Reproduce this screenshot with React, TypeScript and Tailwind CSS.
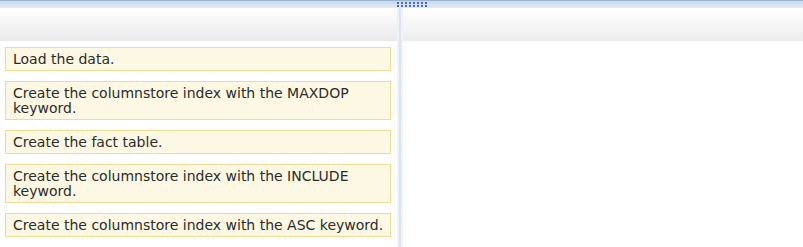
import React from "react";

const items: string[][] = [
  ["Load the data."],
  ["Create the columnstore index with the MAXDOP", "keyword."],
  ["Create the fact table."],
  ["Create the columnstore index with the INCLUDE", "keyword."],
  ["Create the columnstore index with the ASC keyword."],
];

export default function App() {
  return (
    <div
      className="w-[803px] h-[247px] flex flex-col bg-white overflow-hidden"
      style={{ fontFamily: '"DejaVu Sans", Verdana, sans-serif' }}
    >
      {/* top band */}
      <div className="h-[8px] flex flex-col shrink-0">
        <div className="h-[1px] bg-[#9db3cf]" />
        <div className="flex-1 bg-gradient-to-b from-[#c9d9ee] to-[#e0e9f5] flex items-start pl-[397px]">
          <div className="grid grid-cols-8 gap-x-[2px] gap-y-[1px] mt-[1px]">
            {Array.from({ length: 16 }).map((_, i) => (
              <div key={i} className="w-[2px] h-[2px] bg-[#4a6ea6]" />
            ))}
          </div>
        </div>
      </div>
      <div className="flex flex-1 min-h-0">
        {/* left panel */}
        <div className="w-[397px] flex flex-col">
          <div className="h-[33px] bg-gradient-to-b from-[#ffffff] to-[#e9e9e9]" />
          <div className="flex flex-col gap-[10px] pt-[6px] pl-[5px] pr-[6px]">
            {items.map((lines, i) => (
              <div
                key={i}
                className="border border-[#eedc92] bg-[#fdf8e3] pl-[7px] pt-[4px] pb-[3px] text-[14px] leading-[15px] text-[#2b2b2b] whitespace-nowrap"
              >
                {lines.map((l, j) => (
                  <div key={j}>{l}</div>
                ))}
              </div>
            ))}
          </div>
        </div>
        {/* divider */}
        <div className="w-[6px] flex">
          <div className="w-[2px] bg-[#eef3fa]" />
          <div className="w-[2px] bg-[#dbe5f2]" />
          <div className="w-[2px] bg-[#eef3fa]" />
        </div>
        {/* right panel */}
        <div className="flex-1 flex flex-col">
          <div className="h-[33px] bg-gradient-to-b from-[#ffffff] to-[#ececec]" />
          <div className="flex-1 bg-white" />
        </div>
      </div>
    </div>
  );
}
